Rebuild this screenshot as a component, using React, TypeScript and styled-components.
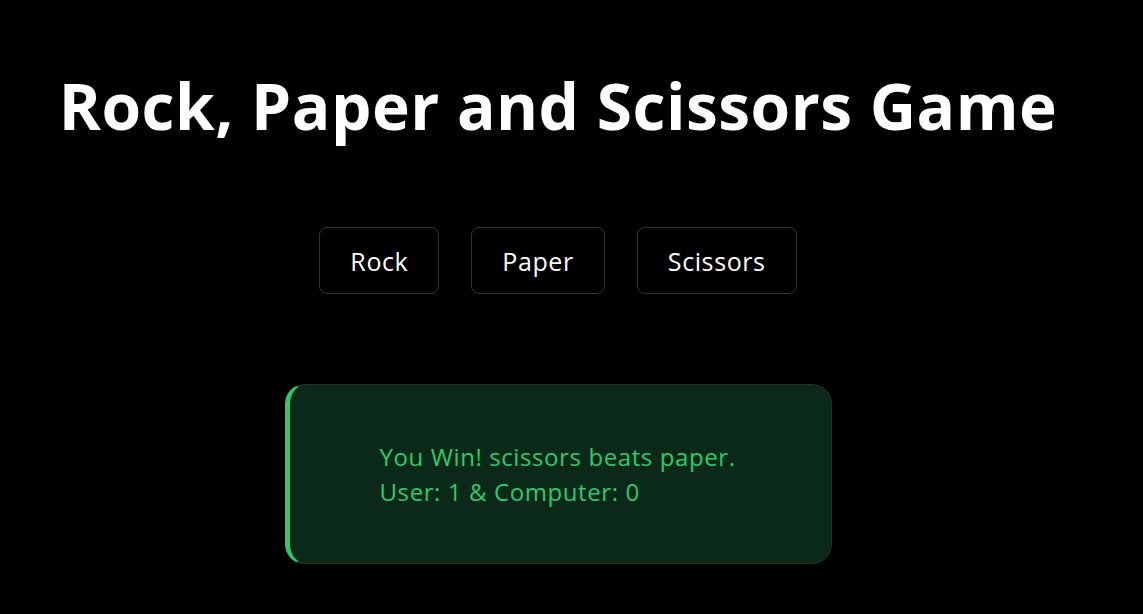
import React from "react";
import styled, { createGlobalStyle } from "styled-components";

const Global = createGlobalStyle`
  html, body {
    margin: 0;
    padding: 0;
    background: #000;
  }
  body {
    font-family: "Open Sans", "Noto Sans", sans-serif;
    color: #fff;
  }
`;

const Page = styled.main`
  width: 1116px;
  display: flex;
  flex-direction: column;
  align-items: center;
  padding-top: 66px;
`;

const Title = styled.h1`
  margin: 0;
  font-size: 64px;
  font-weight: 700;
  line-height: 80px;
  letter-spacing: 0.5px;
  color: #fff;
`;

const Choices = styled.div`
  display: flex;
  gap: 32px;
  margin-top: 81px;
`;

const Choice = styled.button`
  box-sizing: border-box;
  height: 67px;
  padding: 0 30px;
  background: #000;
  border: 1px solid #333;
  border-radius: 8px;
  color: #fff;
  font-family: inherit;
  font-size: 25px;
  font-weight: 400;
  letter-spacing: 0.6px;
  cursor: pointer;
`;

const Result = styled.section`
  box-sizing: border-box;
  width: 547px;
  height: 180px;
  margin-top: 90px;
  display: flex;
  flex-direction: column;
  justify-content: center;
  padding-left: 90px;
  background: #0a2919;
  border: 1px solid #2c2c2c;
  border-left: 5px solid #2bcb6c;
  border-radius: 20px;
  color: #2bcb6c;
  font-size: 24px;
  letter-spacing: 0.6px;
  line-height: 35px;
`;

const Line = styled.p`
  margin: 0;
`;

export default function App() {
  return (
    <>
      <Global />
      <Page>
        <Title>Rock, Paper and Scissors Game</Title>
        <Choices>
          <Choice>Rock</Choice>
          <Choice>Paper</Choice>
          <Choice>Scissors</Choice>
        </Choices>
        <Result>
          <Line>You Win! scissors beats paper.</Line>
          <Line>User: 1 &amp; Computer: 0</Line>
        </Result>
      </Page>
    </>
  );
}
